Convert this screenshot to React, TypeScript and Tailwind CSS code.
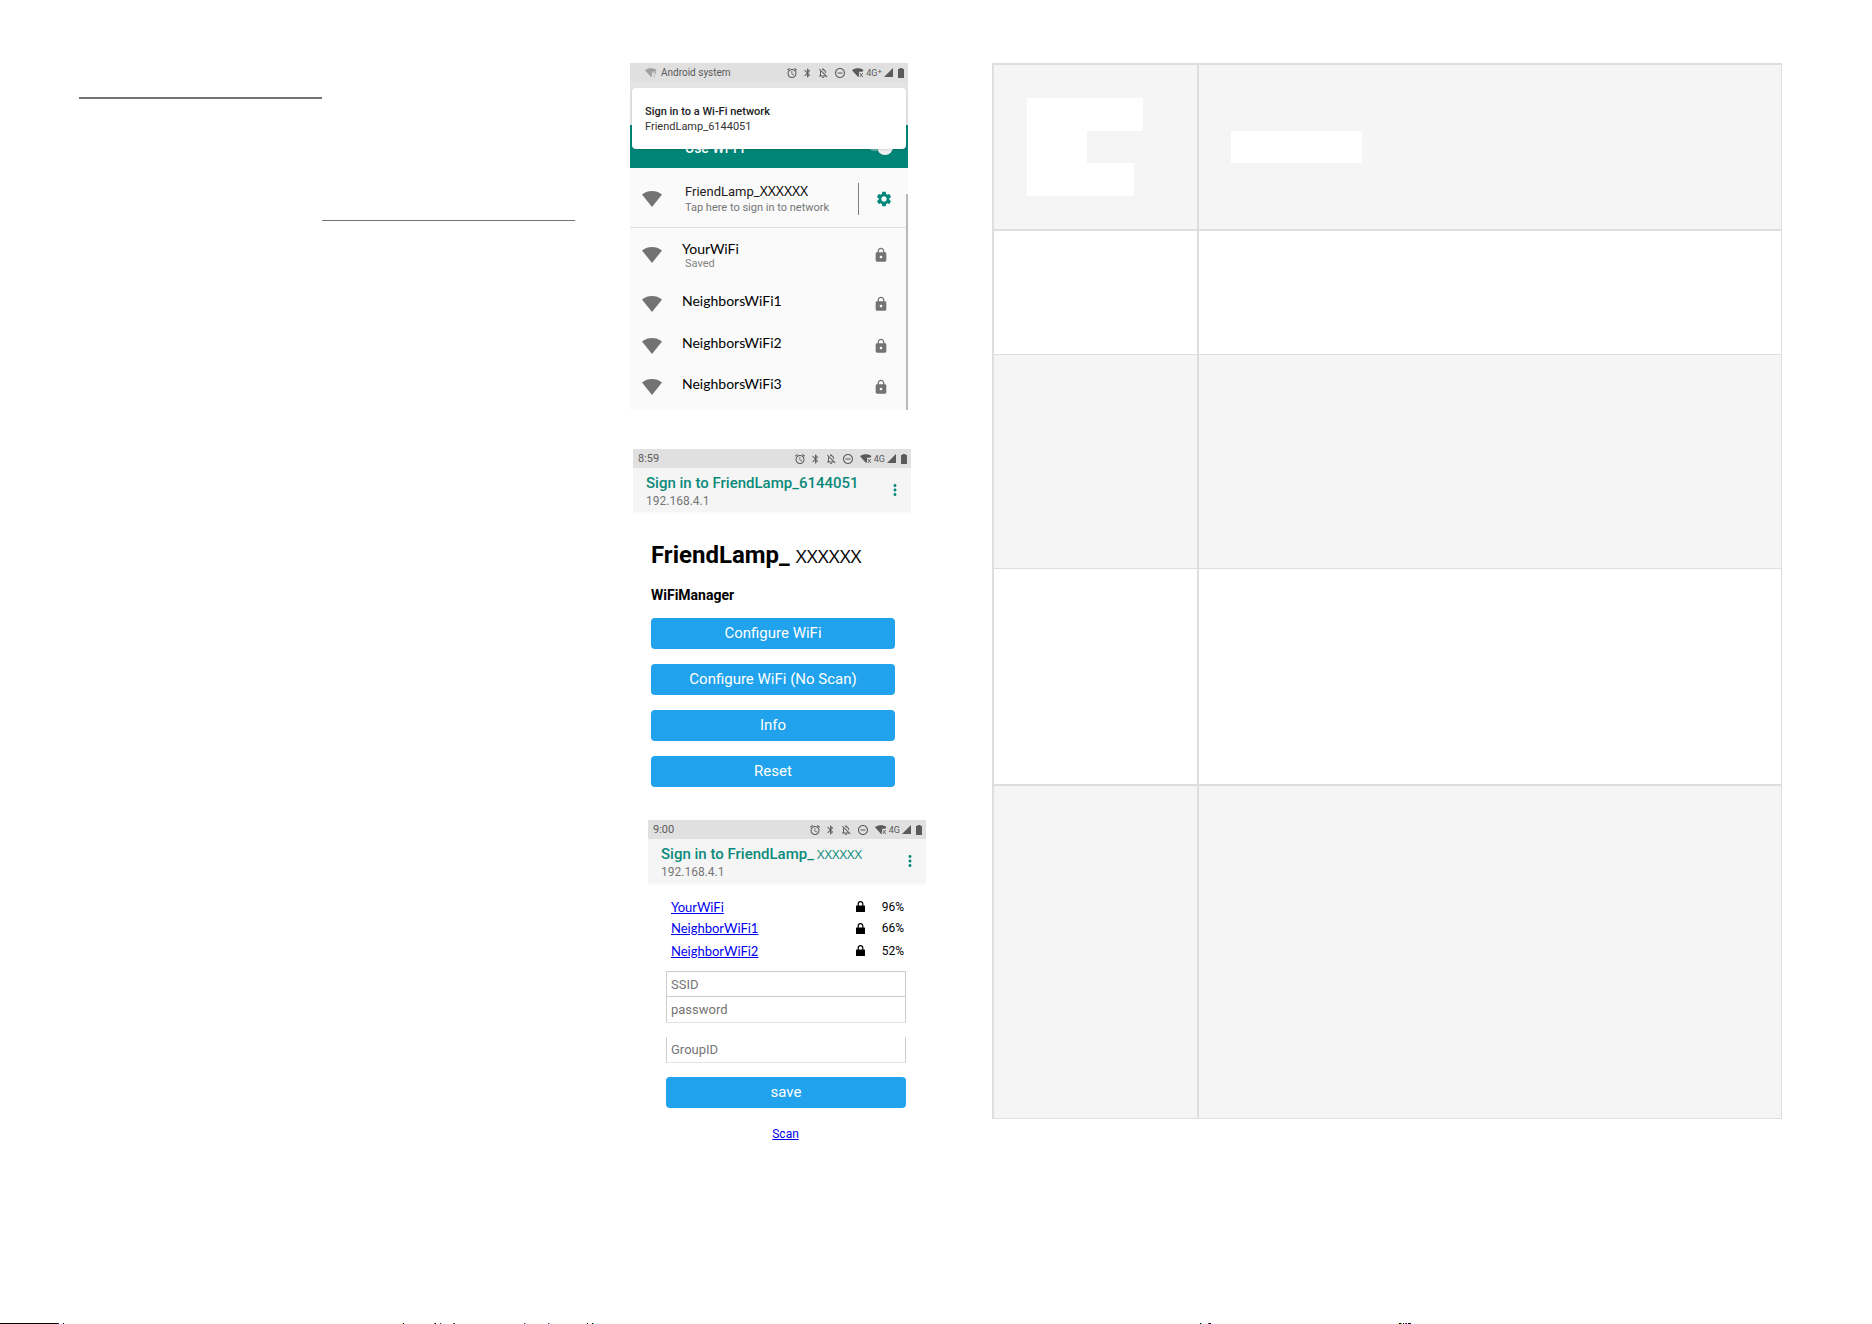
import React from "react";
import {
  MdAlarm,
  MdBluetooth,
  MdLock,
  MdMoreVert,
  MdOutlineNotificationsOff,
  MdRemoveCircleOutline,
  MdSettings,
} from "react-icons/md";
import clsx from "clsx";

const LATO = "font-['Lato','Liberation_Sans',sans-serif]";
const OPEN_SANS = "font-['Open_Sans','Liberation_Sans',sans-serif]";

interface Network {
  name: string;
  saved?: boolean;
  rowClass: string;
}

const networks: Network[] = [
  { name: "YourWiFi", saved: true, rowClass: "h-[54px]" },
  { name: "NeighborsWiFi1", rowClass: "h-[43px]" },
  { name: "NeighborsWiFi2", rowClass: "h-[41px]" },
  { name: "NeighborsWiFi3", rowClass: "h-[41px]" },
];

const scanned = [
  { name: "YourWiFi", signal: "96%", rowClass: "h-[21px]" },
  { name: "NeighborWiFi1", signal: "66%", rowClass: "h-[22px]" },
  { name: "NeighborWiFi2", signal: "52%", rowClass: "h-[23px]" },
];

// Top slivers of the next line of the manual, cut off at the page edge: [x, width, colour]
const slivers: [number, number, string][] = [
  [0, 58, "#000000"],
  [58, 1, "#2a2a9a"],
  [63, 1, "#000000"],
  [402, 1, "#f5f060"],
  [403, 1, "#000000"],
  [434, 1, "#808030"],
  [435, 1, "#000000"],
  [440, 1, "#a02050"],
  [441, 1, "#50f0f0"],
  [453, 1, "#d06020"],
  [454, 1, "#202080"],
  [524, 1, "#a01040"],
  [525, 1, "#60f0f0"],
  [548, 1, "#a01040"],
  [549, 1, "#60f0f0"],
  [587, 1, "#000000"],
  [592, 1, "#000000"],
  [593, 1, "#20e0e0"],
  [1200, 1, "#000000"],
  [1201, 1, "#60f0f0"],
  [1208, 1, "#803010"],
  [1209, 2, "#000060"],
  [1398, 1, "#f5f060"],
  [1399, 2, "#000000"],
  [1401, 1, "#60c040"],
  [1403, 1, "#000000"],
  [1405, 1, "#a040a0"],
  [1406, 1, "#000080"],
  [1408, 2, "#000000"],
  [1410, 1, "#000080"],
];

const WifiIcon: React.FC<{ className?: string }> = ({ className }) => (
  <svg viewBox="0 0 20 16" className={className} fill="currentColor" aria-hidden="true">
    <path d="M10 16 0 3.400C3 1.100 6.500 0 10 0s7 1.100 10 3.400z" />
  </svg>
);

// Wi-Fi wedge with the small "x" that marks a network without internet
const StatusWifi: React.FC<{ mark?: string; className?: string }> = ({ mark = "x", className }) => (
  <svg viewBox="0 0 12 10" className={clsx("h-[10px] w-[12px]", className)} fill="currentColor" aria-hidden="true">
    <path d="M6 9 0 2.300C1.800.900 3.800.3 6 .3s3.900.6 5.500 2L10.200 3.800H7V8z" />
    {mark === "x" ? (
      <path d="m7.800 5 3 4m0-4-3 4" stroke="currentColor" strokeWidth="0.900" />
    ) : (
      <path d="M7.800 5.200c0-1.600 3-1.600 3 0 0 1-1.500 1-1.500 2.200M9.300 8.200v1" stroke="currentColor" fill="none" strokeWidth="0.900" />
    )}
  </svg>
);

const SolidLock: React.FC<{ className?: string }> = ({ className }) => (
  <svg viewBox="0 0 9 11" className={className} fill="currentColor" aria-hidden="true">
    <rect x="0" y="4.500" width="9" height="6.500" rx="0.600" />
    <path d="M2.200 5V3a2.300 2.300 0 0 1 4.600 0v2" fill="none" stroke="currentColor" strokeWidth="1.200" />
  </svg>
);

const StatusBar: React.FC<{ left: React.ReactNode; plus?: boolean }> = ({ left, plus }) => (
  <div className="flex h-[19px] items-center bg-[#e0e0e0] pr-[4px] text-[#5a5a5a]">
    <div className="flex flex-1 items-center">{left}</div>
    <div className="flex items-center">
      <MdAlarm className="mr-[4px] h-[12px] w-[12px]" />
      <MdBluetooth className="mr-[4px] h-[12px] w-[11px]" />
      <MdOutlineNotificationsOff className="mr-[5px] h-[12px] w-[12px]" />
      <MdRemoveCircleOutline className="mr-[6px] h-[12px] w-[12px]" />
      <StatusWifi className="mr-[2px]" />
      <span className="mr-[2px] flex text-[9px] leading-[10px]">
        4G{plus && <span className="text-[8px] leading-[7px]">+</span>}
      </span>
      <svg viewBox="0 0 9 9" className="mr-[5px] h-[9px] w-[9px]" fill="currentColor" aria-hidden="true">
        <path d="M9 0v9H0z" />
      </svg>
      <svg viewBox="0 0 6 10" className="h-[10px] w-[6px]" fill="currentColor" aria-hidden="true">
        <path d="M0 1h1.500V0h3v1H6v9H0z" />
      </svg>
    </div>
  </div>
);

const PortalHeader: React.FC<{ children: React.ReactNode }> = ({ children }) => (
  <div className="flex h-[46px] justify-between border-b-2 border-[#fafafa] bg-[#f5f5f5] pt-[5px] pr-[7px] pl-[13px]">
    <div>
      <h2 className="text-[15px] leading-[20px] font-medium whitespace-nowrap text-[#0b8a7a]">{children}</h2>
      <p className="text-[12px] leading-[16px] text-[#757575]">192.168.4.1</p>
    </div>
    <button type="button" aria-label="More options" className="flex h-[34px] items-center text-[#0b8a7a]">
      <MdMoreVert className="h-[18px] w-[18px]" />
    </button>
  </div>
);

const BlueButton: React.FC<{ children: React.ReactNode }> = ({ children }) => (
  <button
    type="button"
    className="block h-[31px] w-full rounded bg-[#20a2ed] text-center text-[15px] leading-[31px] text-white"
  >
    {children}
  </button>
);

const WifiSettings = () => (
  <section className="w-[278px] bg-[#fafafa]">
    <StatusBar
      plus
      left={
        <>
          <StatusWifi mark="?" className="mr-[4px] ml-[15px] text-[#a0a0a0]" />
          <span className="text-[10px] leading-none">Android system</span>
        </>
      }
    />
    <div className="relative h-[86px] bg-[#e4e4e4] pt-[43px]">
      <div className="flex h-[43px] justify-between bg-[#008577] pt-[13px] pr-[15px] pl-[55px]">
        <span className="text-[14px] leading-[20px] font-medium text-white">Use Wi-Fi</span>
        <button
          type="button"
          role="switch"
          aria-checked="true"
          aria-label="Use Wi-Fi"
          className="flex h-[17px] w-[24px] items-center justify-end rounded-full"
        >
          <span className="h-[9px] w-[12px] rounded-l-full bg-[#5fb0a7]" />
          <span className="h-[16px] w-[16px] shrink-0 rounded-full bg-[#f1f1f1]" />
        </button>
      </div>
      <div className="absolute inset-x-[2px] top-[6px] h-[61px] rounded-sm bg-white pt-[16px] pl-[13px] shadow-sm">
        <p className="text-[11px] leading-[15px] font-medium text-[#212121]">Sign in to a Wi-Fi network</p>
        <p className="text-[11px] leading-[16px] text-[#333333]">FriendLamp_6144051</p>
      </div>
    </div>
    <div className="relative">
      <div className="flex h-[60px] items-center border-b border-[#e0e0e0] pt-[2px] pl-[12px]">
        <WifiIcon className="h-[16px] w-[20px] text-[#737373]" />
        <div className="flex-1 pl-[23px]">
          <p className="text-[13px] leading-[17px] whitespace-nowrap text-[#212121]">
            FriendLamp_<span className={clsx("text-[14px] leading-none text-black", OPEN_SANS)}>XXXXXX</span>
          </p>
          <p className="text-[11px] leading-[15px] whitespace-nowrap text-[#757575]">Tap here to sign in to network</p>
        </div>
        <div className="mr-[16px] h-[32px] w-px bg-[#808080]" />
        <button type="button" aria-label="Network settings" className="mr-[15px] text-[#00897b]">
          <MdSettings className="h-[18px] w-[18px]" />
        </button>
      </div>
      <ul className="pb-[3px]">
        {networks.map((n) => (
          <li key={n.name} className={clsx("flex items-center pl-[12px]", n.rowClass)}>
            <WifiIcon className="h-[16px] w-[20px] text-[#737373]" />
            <div className={clsx("flex-1 pl-[20px]", n.saved ? "pt-[2px]" : "pb-[5px]")}>
              <p className={clsx("text-[14px] leading-[16px] text-black", LATO)}>{n.name}</p>
              {n.saved && <p className="pl-[3px] text-[11px] leading-[14px] text-[#858585]">Saved</p>}
            </div>
            <MdLock className="mr-[19px] h-[16px] w-[16px] text-[#737373]" />
          </li>
        ))}
      </ul>
      <div className="absolute top-[26px] right-0 bottom-0 w-[2px] bg-[#b8b8b8]" />
    </div>
  </section>
);

const ManagerHome = () => (
  <section className="mt-[39px] ml-[3px] w-[278px]">
    <StatusBar left={<span className="pl-[5px] text-[11px] leading-none">8:59</span>} />
    <PortalHeader>Sign in to FriendLamp_6144051</PortalHeader>
    <div className="pr-[16px] pl-[18px]">
      <h1 className="pt-[25px] text-[24px] leading-[32px] font-bold whitespace-nowrap text-black">
        FriendLamp_<span className={clsx("ml-[6px] text-[19px] leading-none font-normal", OPEN_SANS)}>XXXXXX</span>
      </h1>
      <h3 className="pt-[14px] text-[14px] leading-[20px] font-bold text-black">WiFiManager</h3>
      <div className="flex flex-col gap-[15px] pt-[13px]">
        <BlueButton>Configure WiFi</BlueButton>
        <BlueButton>Configure WiFi (No Scan)</BlueButton>
        <BlueButton>Info</BlueButton>
        <BlueButton>Reset</BlueButton>
      </div>
    </div>
  </section>
);

const inputClass =
  "block w-full border-x border-b border-[#cccccc] px-[4px] text-[13px] text-black placeholder:text-[#757575] outline-none";

const ManagerScan = () => (
  <section className="mt-[33px] ml-[18px] w-[278px]">
    <StatusBar left={<span className="pl-[5px] text-[11px] leading-none">9:00</span>} />
    <PortalHeader>
      Sign in to FriendLamp_<span className={clsx("ml-[3px] text-[13px] leading-none font-normal", OPEN_SANS)}>XXXXXX</span>
    </PortalHeader>
    <ul className="pt-[11px] pr-[22px] pl-[23px]">
      {scanned.map((s) => (
        <li key={s.name} className={clsx("flex items-center text-black", s.rowClass)}>
          <a href="#" className={clsx("flex-1 text-[13px] leading-[18px] text-[#0000ee] underline", LATO)}>
            {s.name}
          </a>
          <SolidLock className="mr-[13px] h-[11px] w-[9px]" />
          <span className="w-[26px] text-right text-[12px] leading-[18px]">{s.signal}</span>
        </li>
      ))}
    </ul>
    <form className="pt-[9px] pr-[20px] pl-[18px]" onSubmit={(e) => e.preventDefault()}>
      <input aria-label="SSID" placeholder="SSID" className={clsx(inputClass, "h-[26px] border-t")} />
      <input aria-label="password" placeholder="password" className={clsx(inputClass, "h-[26px] border-b-[#e4e4e4]")} />
      <input
        aria-label="GroupID"
        placeholder="GroupID"
        className={clsx(inputClass, "mt-[14px] mb-[14px] h-[26px] border-b-[#e4e4e4]")}
      />
      <BlueButton>save</BlueButton>
    </form>
    <p className="pt-[18px] pr-[3px] text-center text-[12px] leading-[16px]">
      <a href="#" className="text-[#0000ee] underline">
        Scan
      </a>
    </p>
  </section>
);

const ManualTable = () => (
  <table className="w-full table-fixed border-separate border-spacing-0 border-r border-b border-[#dedede]">
    <colgroup>
      <col className="w-[26%]" />
      <col />
    </colgroup>
    <tbody className="[&_td]:border-l-2 [&_td]:border-[#dedede]">
      <tr className="h-[166px] bg-[#f5f5f5]">
        <td className="border-t-2 pl-[33px] align-middle">
          <div className="h-[33px] w-[116px] bg-white" />
          <div className="h-[32px] w-[60px] bg-white" />
          <div className="h-[33px] w-[107px] bg-white" />
        </td>
        <td className="border-t-2 pl-[32px] align-middle">
          <div className="h-[32px] w-[131px] bg-white" />
        </td>
      </tr>
      <tr className="h-[125px]">
        <td className="border-t-2" />
        <td className="border-t-2" />
      </tr>
      <tr className="h-[214px] bg-[#f5f5f5]">
        <td className="border-t" />
        <td className="border-t" />
      </tr>
      <tr className="h-[216px]">
        <td className="border-t" />
        <td className="border-t" />
      </tr>
      <tr className="h-[334px] bg-[#f5f5f5]">
        <td className="border-t-2" />
        <td className="border-t-2" />
      </tr>
    </tbody>
  </table>
);

export default function App() {
  return (
    <div className="flex min-h-screen flex-col justify-between bg-white font-['Roboto','Liberation_Sans',sans-serif]">
      <main className="grid grid-cols-[551fr_362px_790fr] items-start pt-[63px] pr-[90px] pl-[79px]">
        <div className="pt-[34px] pr-[55px]">
          <div className="h-[2px] w-[49%] bg-[#747474]" />
          <div className="mt-[121px] ml-auto h-px w-[51%] bg-[#747474]" />
        </div>
        <div>
          <WifiSettings />
          <ManagerHome />
          <ManagerScan />
        </div>
        <ManualTable />
      </main>
      <svg viewBox="0 0 1872 1" preserveAspectRatio="none" className="h-px w-full" shapeRendering="crispEdges" aria-hidden="true">
        {slivers.map(([x, width, fill]) => (
          <rect key={x} x={x} y="0" width={width} height="1" fill={fill} />
        ))}
      </svg>
    </div>
  );
}
